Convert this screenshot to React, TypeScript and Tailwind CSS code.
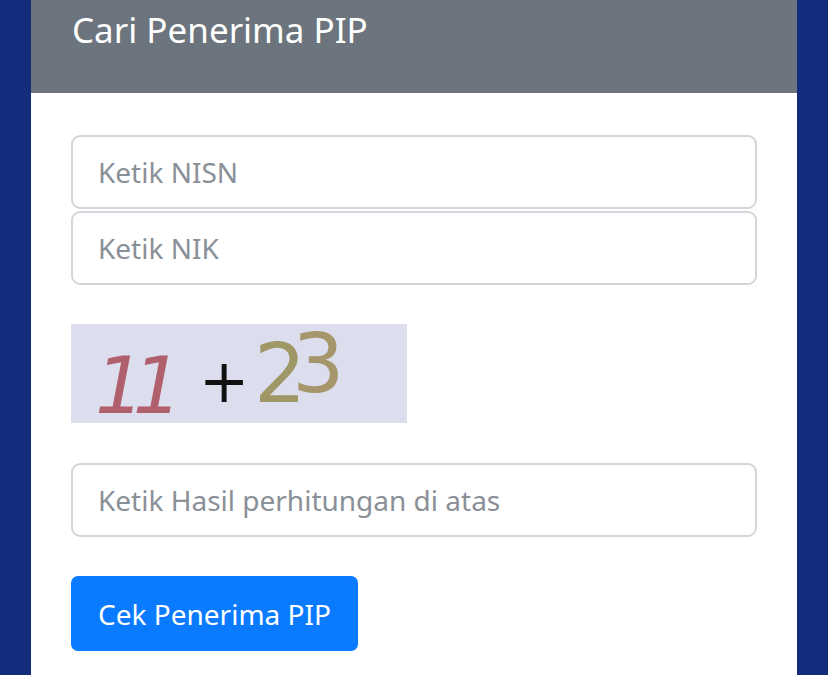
function Captcha() {
  return (
    <svg width="336" height="99" viewBox="0 0 336 99" className="block overflow-visible font-['DejaVu_Sans',sans-serif]">
      <rect width="336" height="99" fill="#dcdded" />
      <text x="24" y="89" fontSize="78" fontStyle="italic" letterSpacing="-12" fill="#b05f6c">
        11
      </text>
      <text x="128" y="78" fontSize="60" fill="#111111">
        +
      </text>
      <text x="183" y="78" fontSize="82" letterSpacing="-14" fill="#9f9765">
        2<tspan dy="-10" fill="#a6966c">3</tspan>
      </text>
    </svg>
  );
}

export default function App() {
  return (
    <div className="h-[675px] w-[828px] overflow-hidden bg-[#132c7c] px-[31px] font-['Noto_Sans',sans-serif]">
      <div className="h-full bg-white">
        <div className="flex h-[93px] items-start bg-[#6c757d] px-[41px] pt-[4px]">
          <h1 className="text-[35px] font-normal leading-[52px] text-white">Cari Penerima PIP</h1>
        </div>
        <div className="flex flex-col px-[40px] pt-[42px]">
          <input
            placeholder="Ketik NISN"
            className="h-[74px] w-full rounded-[9px] border-2 border-[#d3d7db] px-[25px] text-[28px] text-[#495057] placeholder:text-[#8a9097] outline-none"
          />
          <input
            placeholder="Ketik NIK"
            className="mt-[2px] h-[74px] w-full rounded-[9px] border-2 border-[#d3d7db] px-[25px] text-[28px] text-[#495057] placeholder:text-[#8a9097] outline-none"
          />
          <div className="mt-[39px]">
            <Captcha />
          </div>
          <input
            placeholder="Ketik Hasil perhitungan di atas"
            className="mt-[40px] h-[74px] w-full rounded-[9px] border-2 border-[#d3d7db] px-[25px] text-[28px] text-[#495057] placeholder:text-[#8a9097] outline-none"
          />
          <button className="mt-[39px] h-[75px] w-[287px] rounded-[7px] bg-[#0a7bff] text-[28px] text-white">
            Cek Penerima PIP
          </button>
        </div>
      </div>
    </div>
  );
}
